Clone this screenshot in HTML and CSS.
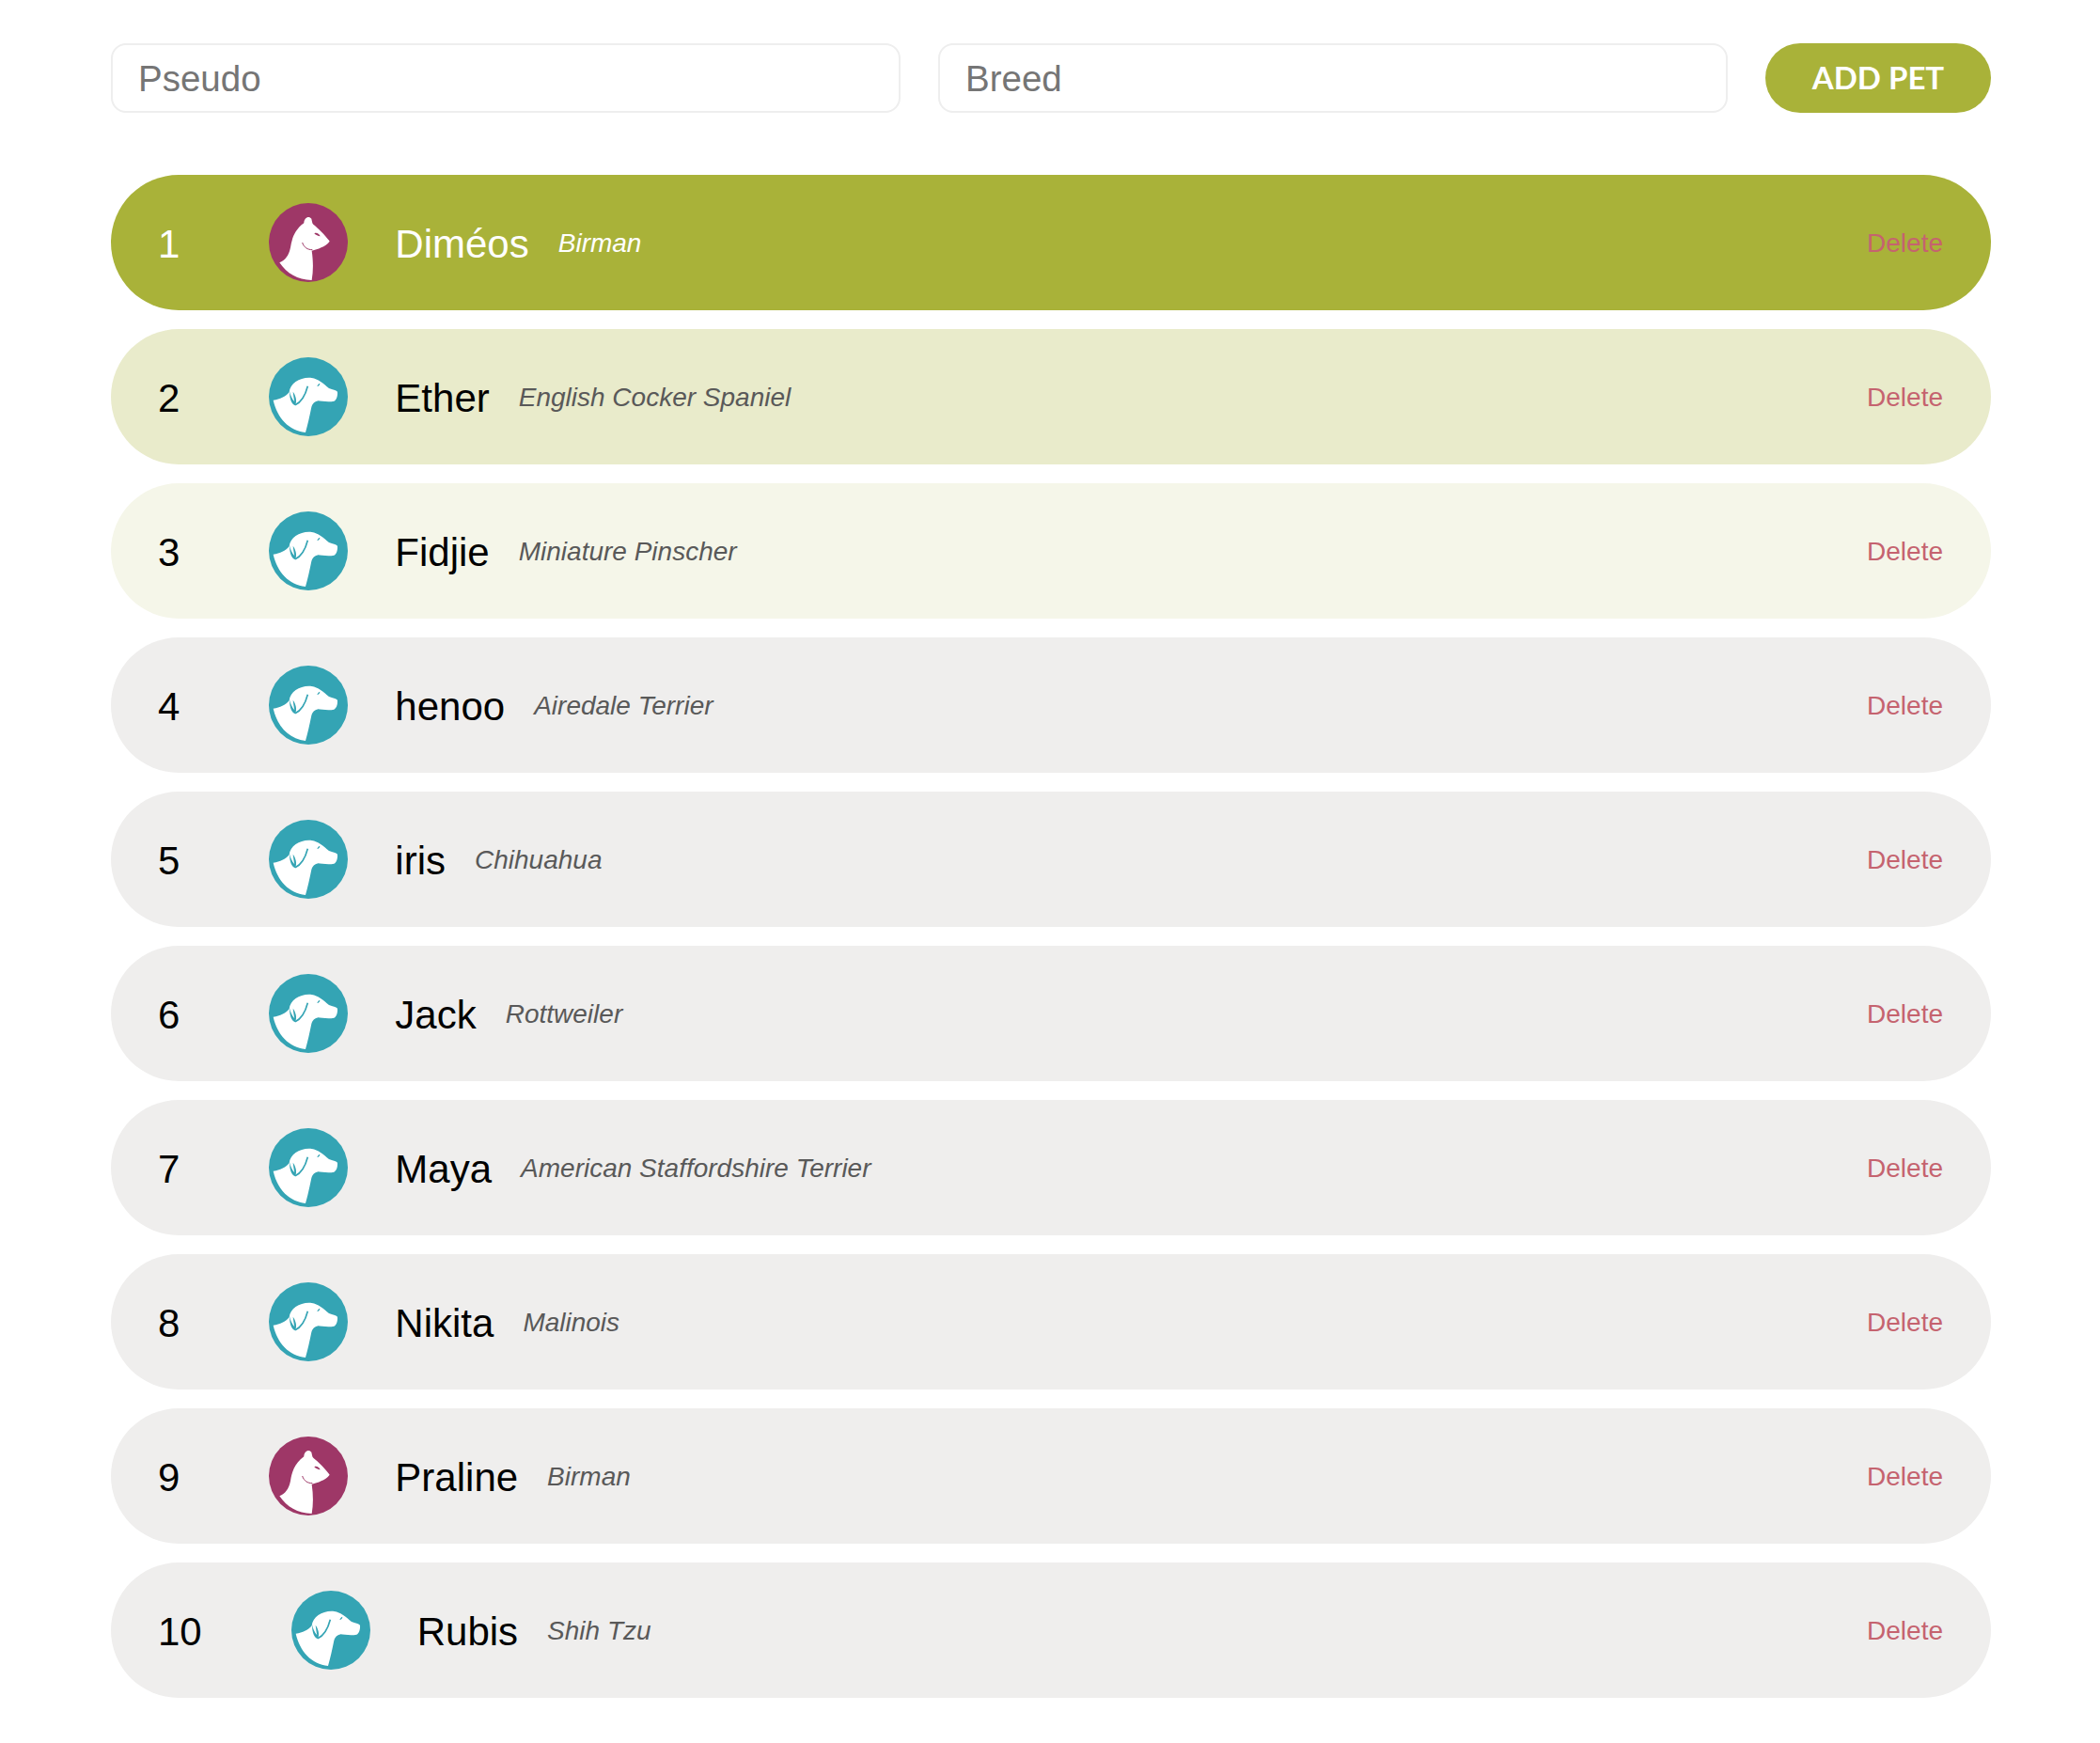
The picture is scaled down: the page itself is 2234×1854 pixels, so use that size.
FILE: index.html
```html
<!DOCTYPE html>
<html lang="en">
<head>
    <meta charset="UTF-8">
    <meta name="viewport" content="width=device-width, initial-scale=1.0">
    <title>Pets</title>
    <link rel="stylesheet" href="styles.css">
</head>
<body>

<svg class="defs" width="0" height="0">
    <symbol id="cat" viewBox="48 48 252 252">
        <circle cx="174" cy="174" r="126" fill="#9e3767"/>
        <path fill="#fff" d="M82 238 C100 232 112 215 117 190 C121 165 128 135 160 112 C160 96 175 86 184 98 C186 106 186 112 190 116 C205 128 228 150 242 170 C235 180 225 186 215 190 C205 195 195 198 185 200 C190 235 190 265 185 294 C140 294 105 272 82 238 Z"/>
        <path fill="none" stroke="#9e3767" stroke-width="3" d="M155 174 C160 190 172 197 187 197"/>
        <path fill="#9e3767" d="M193 145 C200 141 208 146 212 154 C205 153 198 150 193 145 Z"/>
    </symbol>
    <symbol id="dog" viewBox="48 46 252 252">
        <circle cx="174" cy="172" r="126" fill="#34a4b4"/>
        <path fill="#fff" d="M62 183 C85 180 100 172 113 158 C116 128 150 108 185 112 C205 115 222 130 240 145 C252 150 262 150 267 156 C268 170 264 182 256 186 C240 190 215 186 205 185 C195 188 188 192 184 205 C178 235 172 262 165 286 C112 280 75 240 62 183 Z"/>
        <path fill="none" stroke="#34a4b4" stroke-width="5" d="M132 198 C150 190 165 165 172 138"/>
        <path fill="#34a4b4" d="M114 155 C114 178 120 196 132 200 C139 186 134 168 125 156 C127 170 128 180 130 188 C122 180 117 168 114 155 Z"/>
        <path fill="#34a4b4" d="M202 139 C204 133 208 129 211 129 C211 134 207 139 202 139 Z"/>
    </symbol>
</svg>

<div class="container">
    <form class="add-form">
        <input class="field" type="text" placeholder="Pseudo">
        <input class="field" type="text" placeholder="Breed">
        <button type="button" class="btn">ADD PET</button>
    </form>

    <ul class="pet-list">
        <li class="pet first">
            <span class="rank">1</span>
            <svg class="avatar"><use href="#cat"/></svg>
            <span class="name">Diméos</span>
            <span class="breed">Birman</span>
            <a class="delete">Delete</a>
        </li>
        <li class="pet second">
            <span class="rank">2</span>
            <svg class="avatar"><use href="#dog"/></svg>
            <span class="name">Ether</span>
            <span class="breed">English Cocker Spaniel</span>
            <a class="delete">Delete</a>
        </li>
        <li class="pet third">
            <span class="rank">3</span>
            <svg class="avatar"><use href="#dog"/></svg>
            <span class="name">Fidjie</span>
            <span class="breed">Miniature Pinscher</span>
            <a class="delete">Delete</a>
        </li>
        <li class="pet">
            <span class="rank">4</span>
            <svg class="avatar"><use href="#dog"/></svg>
            <span class="name">henoo</span>
            <span class="breed">Airedale Terrier</span>
            <a class="delete">Delete</a>
        </li>
        <li class="pet">
            <span class="rank">5</span>
            <svg class="avatar"><use href="#dog"/></svg>
            <span class="name">iris</span>
            <span class="breed">Chihuahua</span>
            <a class="delete">Delete</a>
        </li>
        <li class="pet">
            <span class="rank">6</span>
            <svg class="avatar"><use href="#dog"/></svg>
            <span class="name">Jack</span>
            <span class="breed">Rottweiler</span>
            <a class="delete">Delete</a>
        </li>
        <li class="pet">
            <span class="rank">7</span>
            <svg class="avatar"><use href="#dog"/></svg>
            <span class="name">Maya</span>
            <span class="breed">American Staffordshire Terrier</span>
            <a class="delete">Delete</a>
        </li>
        <li class="pet">
            <span class="rank">8</span>
            <svg class="avatar"><use href="#dog"/></svg>
            <span class="name">Nikita</span>
            <span class="breed">Malinois</span>
            <a class="delete">Delete</a>
        </li>
        <li class="pet">
            <span class="rank">9</span>
            <svg class="avatar"><use href="#cat"/></svg>
            <span class="name">Praline</span>
            <span class="breed">Birman</span>
            <a class="delete">Delete</a>
        </li>
        <li class="pet">
            <span class="rank">10</span>
            <svg class="avatar"><use href="#dog"/></svg>
            <span class="name">Rubis</span>
            <span class="breed">Shih Tzu</span>
            <a class="delete">Delete</a>
        </li>
    </ul>
</div>

</body>
</html>
```

FILE: styles.css
```css
body {
    font-family: "Liberation Sans", Arial, sans-serif;
    background-color: #fff;
    margin: 0;
}

.defs {
    display: block;
}

.container {
    width: 2000px;
    margin-left: 118px;
    padding-top: 46px;
}

.add-form {
    display: flex;
    gap: 40px;
}

.field {
    flex: 1;
    min-width: 0;
    height: 74px;
    box-sizing: border-box;
    padding: 2px 27px 0;
    border: 2px solid #eeeeee;
    border-radius: 16px;
    font-family: "Liberation Sans", Arial, sans-serif;
    font-size: 38.5px;
}

.field::placeholder {
    color: #757575;
    opacity: 1;
}

.btn {
    width: 240px;
    height: 74px;
    padding: 0 0 3px;
    background-color: #a9b239;
    color: white;
    border: none;
    border-radius: 37px;
    font-family: Lato, sans-serif;
    font-weight: bold;
    font-size: 33px;
    cursor: pointer;
}

.pet-list {
    list-style: none;
    margin: 66px 0 0;
    padding: 0;
    display: flex;
    flex-direction: column;
    gap: 20px;
}

.pet {
    display: flex;
    align-items: center;
    height: 144px;
    padding: 0 50px;
    border-radius: 72px;
    background: #efeeed;
    color: #000;
}

.pet.first {
    background: #a9b239;
    color: #fff;
}

.pet.second {
    background: #e9ebcb;
}

.pet.third {
    background: #f5f6e9;
}

.rank {
    padding-top: 3px;
    font-size: 42px;
    margin-right: 95px;
}

.avatar {
    width: 84px;
    height: 84px;
    margin-right: 50px;
}

.name {
    padding-top: 3px;
    font-size: 42px;
    margin-right: 31px;
}

.breed {
    padding-top: 1px;
    font-size: 28px;
    font-style: italic;
    color: #595959;
}

.pet.first .breed {
    color: #fff;
}

.delete {
    padding-top: 1px;
    margin-left: auto;
    margin-right: 1px;
    font-size: 28px;
    color: #c5636f;
    cursor: pointer;
}
```
